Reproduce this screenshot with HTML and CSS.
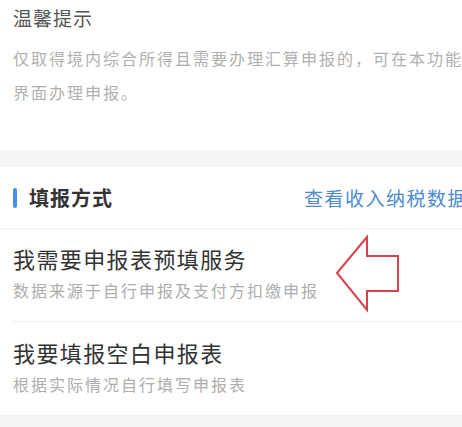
FILE: index.html
```html
<!DOCTYPE html>
<html lang="zh-CN">
<head>
  <meta charset="UTF-8">
  <meta name="viewport" content="width=device-width, initial-scale=1.0">
  <title>填报方式</title>
  <link rel="stylesheet" href="styles.css">
</head>
<body>

  <section class="tips">
    <h2>温馨提示</h2>
    <p>仅取得境内综合所得且需要办理汇算申报的，可在本功能<br>界面办理申报。</p>
  </section>

  <div class="band"></div>

  <section class="methods">
    <div class="methods-head">
      <h3><span class="bar"></span>填报方式</h3>
      <a class="link">查看收入纳税数据</a>
    </div>

    <div class="list">
      <div class="item">
        <div class="item-title">我需要申报表预填服务</div>
        <div class="item-sub">数据来源于自行申报及支付方扣缴申报</div>
      </div>
      <div class="item">
        <div class="item-title">我要填报空白申报表</div>
        <div class="item-sub">根据实际情况自行填写申报表</div>
      </div>

      <!-- red hint arrow -->
      <svg class="arrow" width="80" height="90" viewBox="0 0 80 90">
        <polygon points="7,43 37,7 37,26 68,26 68,61 37,61 37,80" fill="none" stroke="#d8424c" stroke-width="2" stroke-linejoin="miter"/>
      </svg>
    </div>
  </section>

  <div class="band"></div>

</body>
</html>
```

FILE: styles.css
```css
* {
  box-sizing: border-box;
  margin: 0;
  padding: 0;
}

body {
  width: 462px;
  height: 427px;
  overflow: hidden;
  background-color: #fff;
  font-family: "Noto Sans CJK SC", "Noto Sans", sans-serif;
  color: #333;
}

.tips {
  padding: 0 0 41px 13px;
  overflow: hidden;
}

.tips h2 {
  font-size: 19px;
  font-weight: normal;
  line-height: 36px;
  letter-spacing: 1px;
  color: #555;
}

.tips p {
  margin-top: 5px;
  font-size: 16px;
  line-height: 34px;
  letter-spacing: 2px;
  color: #b0b0b0;
  white-space: nowrap;
}

.band {
  height: 17px;
  background-color: #f4f5f7;
}

.methods-head {
  display: flex;
  align-items: center;
  justify-content: space-between;
  height: 62px;
  padding-left: 13px;
  border-bottom: 1px solid #eeeff1;
  overflow: hidden;
  white-space: nowrap;
}

.methods-head h3 {
  display: flex;
  align-items: center;
  font-size: 20px;
  font-weight: bold;
  letter-spacing: 1px;
  color: #333;
}

.bar {
  width: 4px;
  height: 20px;
  margin-right: 12px;
  border-radius: 2px;
  background-color: #4a8fe3;
}

.link {
  flex-shrink: 0;
  width: 158px;
  font-size: 19px;
  letter-spacing: 1.5px;
  color: #4d8ad0;
  overflow: hidden;
}

.list {
  position: relative;
  padding-left: 13px;
}

.item {
  padding: 14px 0 19px;
}

.item + .item {
  border-top: 1px solid #eeeff1;
  padding-top: 15px;
}

.item-title {
  font-size: 22px;
  line-height: 30px;
  letter-spacing: 1.4px;
  color: #333;
}

.item-sub {
  margin-top: 5px;
  font-size: 16px;
  line-height: 24px;
  letter-spacing: 2px;
  color: #adadad;
}

.arrow {
  position: absolute;
  left: 330px;
  top: 1px;
}
```
